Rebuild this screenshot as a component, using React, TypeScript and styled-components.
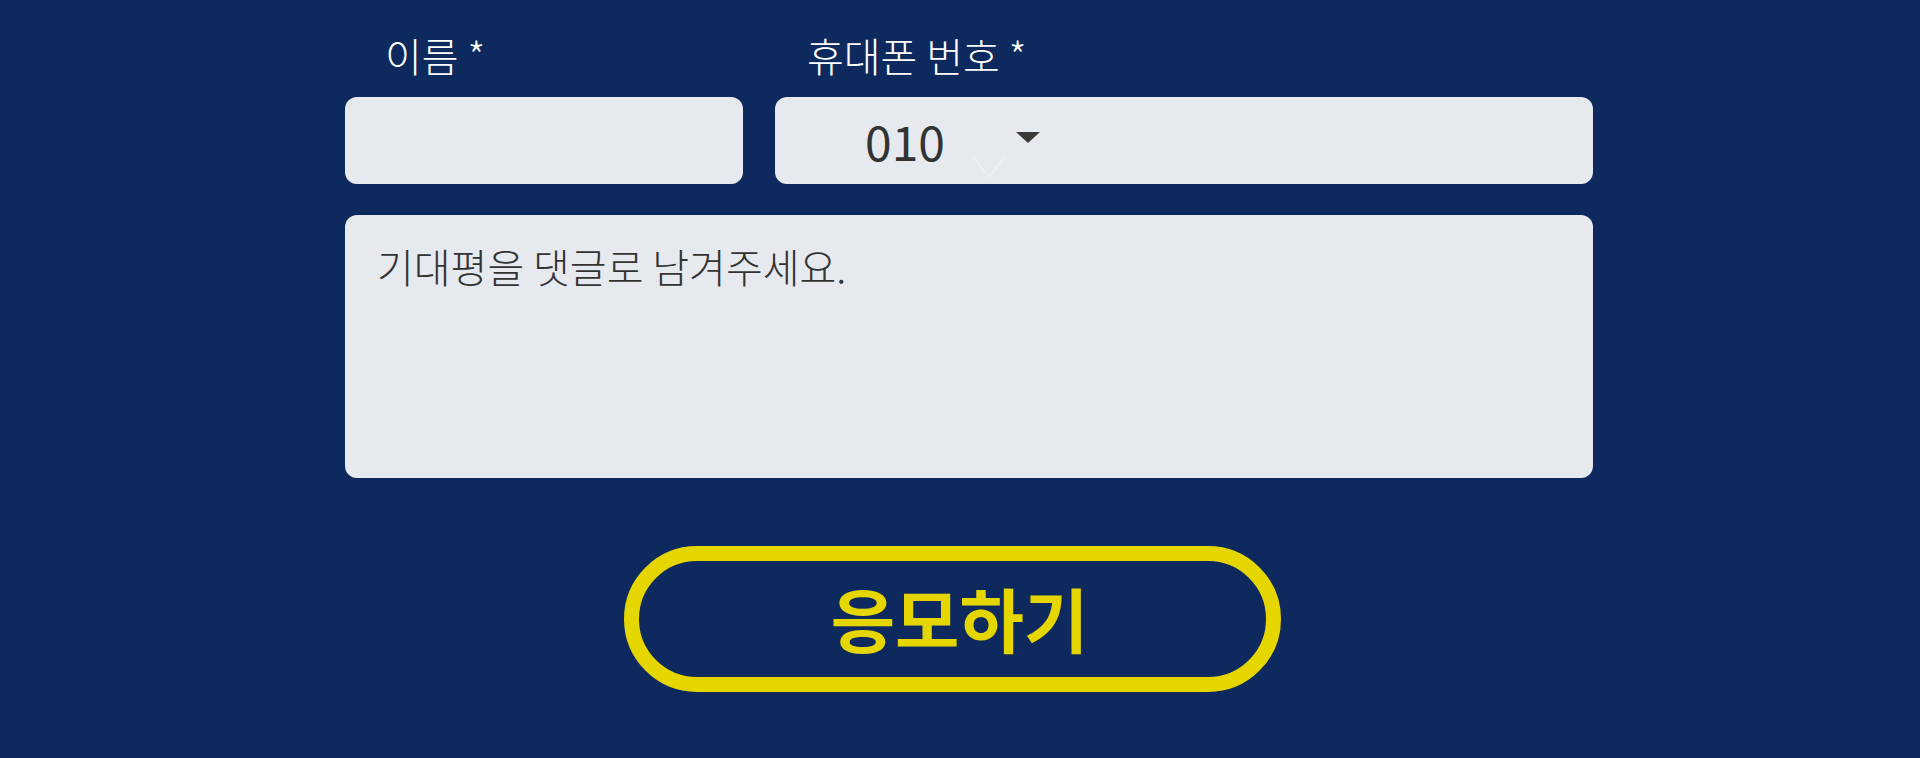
import React from "react";
import styled, { createGlobalStyle } from "styled-components";

const Global = createGlobalStyle`
  html, body { margin: 0; padding: 0; background: #0e295e; }
  body { font-family: "Noto Sans CJK KR", "Noto Sans", sans-serif; }
  * { box-sizing: border-box; }
`;

const lightFont = `"Noto Sans CJK KR Light", "Noto Sans CJK KR DemiLight", "Noto Sans CJK KR", sans-serif`;

const Page = styled.main`
  width: 1920px;
  height: 758px;
  background: #0e295e;
  padding: 35px 0 0 345px;
`;

const Form = styled.form`
  width: 1248px;
  display: flex;
  flex-direction: column;
`;

const FieldRow = styled.div`
  display: grid;
  grid-template-columns: 398px 818px;
  column-gap: 32px;
`;

const Field = styled.div`
  display: flex;
  flex-direction: column;
`;

const Label = styled.label<{ $indent: number }>`
  display: block;
  height: 40px;
  line-height: 40px;
  font-family: ${lightFont};
  font-size: 40px;
  font-weight: 300;
  color: #ffffff;
  padding-left: ${(p) => p.$indent}px;
  margin-bottom: 22px;
  white-space: nowrap;
`;

const Box = styled.div`
  height: 87px;
  background: #e6e9ee;
  border-radius: 12px;
`;

const TextInput = styled.input`
  width: 100%;
  height: 87px;
  border: none;
  outline: none;
  background: #e6e9ee;
  border-radius: 12px;
  padding: 0 24px;
  font-family: ${lightFont};
  font-size: 40px;
  color: #333;
`;

const PhoneBox = styled(Box)`
  display: flex;
  align-items: center;
  padding-left: 90px;
  position: relative;
`;

const Prefix = styled.span`
  font-size: 48px;
  color: #333333;
  line-height: 1;
  position: relative;
  top: -1px;
`;

const Caret = styled.svg`
  margin-left: 71px;
  margin-top: -6px;
`;

const Ghost = styled.svg`
  position: absolute;
  left: 198px;
  top: 60px;
  opacity: 0.6;
`;

const TextArea = styled.textarea`
  margin-top: 31px;
  width: 1248px;
  height: 263px;
  border: none;
  outline: none;
  resize: none;
  background: #e6e9ee;
  border-radius: 12px;
  padding: 23px 32px;
  font-family: ${lightFont};
  font-size: 40px;
  font-weight: 300;
  line-height: 56px;
  color: #333333;
  &::placeholder {
    color: #333333;
    opacity: 1;
  }
`;

const Submit = styled.button`
  margin: 68px 0 0 279px;
  width: 657px;
  height: 146px;
  border: 15px solid #e6d600;
  border-radius: 73px;
  background: transparent;
  color: #e6d600;
  font-family: inherit;
  font-size: 70px;
  font-weight: 700;
  letter-spacing: 0;
  display: flex;
  align-items: center;
  justify-content: center;
  padding: 0 0 4px 14px;
`;

export default function App() {
  return (
    <>
      <Global />
      <Page>
        <Form onSubmit={(e) => e.preventDefault()}>
          <FieldRow>
            <Field>
              <Label $indent={40}>이름 *</Label>
              <TextInput type="text" />
            </Field>
            <Field>
              <Label $indent={32}>휴대폰 번호 *</Label>
              <PhoneBox>
                <Prefix>010</Prefix>
                <Caret width="24" height="11" viewBox="0 0 24 11">
                  <path d="M0 0 H24 L12 11 Z" fill="#3a3a3a" />
                </Caret>
                <Ghost width="32" height="21" viewBox="0 0 32 21">
                  <path d="M1 1 L16 20 L31 1" fill="none" stroke="#ffffff" strokeWidth="1" />
                </Ghost>
              </PhoneBox>
            </Field>
          </FieldRow>
          <TextArea placeholder="기대평을 댓글로 남겨주세요." />
          <Submit type="submit">응모하기</Submit>
        </Form>
      </Page>
    </>
  );
}
